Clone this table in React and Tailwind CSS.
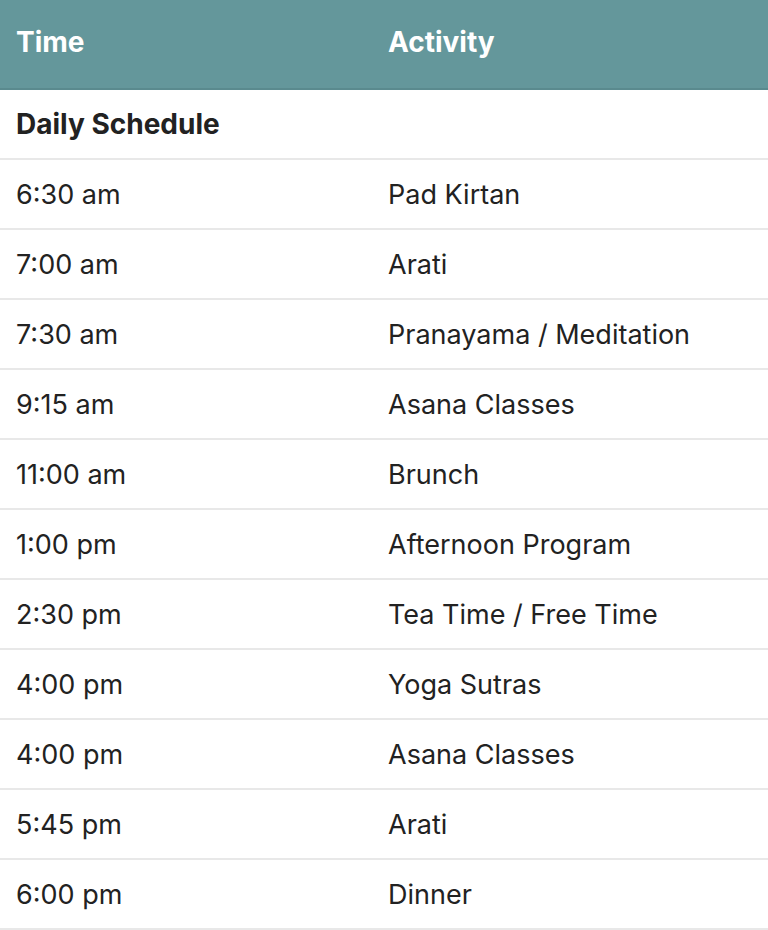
const rows = [
  ["6:30 am", "Pad Kirtan"],
  ["7:00 am", "Arati"],
  ["7:30 am", "Pranayama / Meditation"],
  ["9:15 am", "Asana Classes"],
  ["11:00 am", "Brunch"],
  ["1:00 pm", "Afternoon Program"],
  ["2:30 pm", "Tea Time / Free Time"],
  ["4:00 pm", "Yoga Sutras"],
  ["4:00 pm", "Asana Classes"],
  ["5:45 pm", "Arati"],
  ["6:00 pm", "Dinner"],
];

export default function App() {
  return (
    <div className="w-[768px] bg-white font-['Inter',sans-serif] text-[27px] text-[#222]">
      {/* HEADER */}
      <div className="grid grid-cols-[372px_1fr] h-[90px] items-center pb-1 bg-[#64979b] border-b-2 border-[#5a8a8e] text-white text-[28px] font-bold">
        <div className="pl-4">Time</div>
        <div className="pl-4">Activity</div>
      </div>

      <div className="h-[70px] flex items-center px-4 border-b-2 border-[#e8e8e8] text-[28px] font-bold">
        Daily Schedule
      </div>

      {rows.map(([time, activity], i) => (
        <div
          key={i}
          className="grid grid-cols-[372px_1fr] h-[70px] items-center pt-0.5 border-b-2 border-[#e8e8e8]"
        >
          <div className="pl-4">{time}</div>
          <div className="pl-4">{activity}</div>
        </div>
      ))}
    </div>
  );
}
